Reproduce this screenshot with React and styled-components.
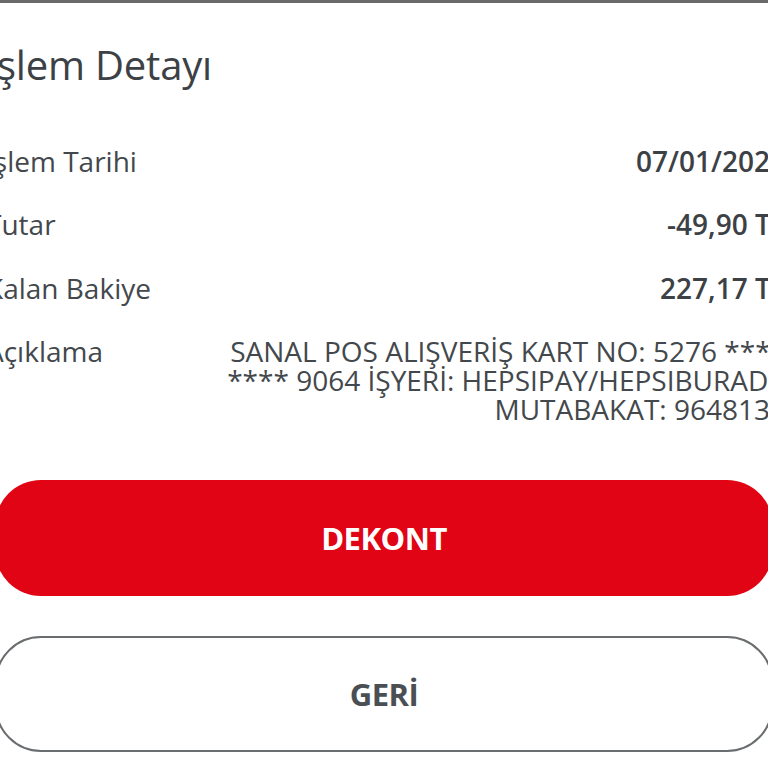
import styled, { createGlobalStyle } from "styled-components";

const GlobalStyle = createGlobalStyle`
    html, body {
        margin: 0;
        padding: 0;
        background: #ffffff;
        overflow: hidden;
    }
    body {
        font-family: "Open Sans", "Liberation Sans", sans-serif;
        color: #3f4448;
    }
`;

const rows = [
    { label: "İşlem Tarihi", value: "07/01/2025" },
    { label: "Tutar", value: "-49,90 TL" },
    { label: "Kalan Bakiye", value: "227,17 TL" },
];

const App = () => {
    return (
        <>
            <GlobalStyle />
            <Sheet>
                <Content>
                    <Title>İşlem Detayı</Title>
                    <List>
                        {rows.map(row => (
                            <Row key={row.label}>
                                <Label>{row.label}</Label>
                                <Value>{row.value}</Value>
                            </Row>
                        ))}
                        <Row>
                            <Label>Açıklama</Label>
                            <Description>
                                SANAL POS ALIŞVERİŞ KART NO: 5276 ****<br />
                                **** 9064 İŞYERİ: HEPSIPAY/HEPSIBURADA<br />
                                MUTABAKAT: 9648134
                            </Description>
                        </Row>
                    </List>
                    <Buttons>
                        <Button primary>DEKONT</Button>
                        <Button>GERİ</Button>
                    </Buttons>
                </Content>
            </Sheet>
        </>
    );
};

export default App;

const Sheet = styled.div`
    width: 768px;
    height: 768px;
    overflow: hidden;
    border-top: 3px solid #6a6a6a;
    box-sizing: border-box;
`;

const Content = styled.div`
    width: 800px;
    margin-left: -14px;
    display: flex;
    flex-direction: column;
`;

const Title = styled.h1`
    margin: 38px 0 0 0;
    font-size: 40px;
    font-weight: 500;
    line-height: 48px;
    letter-spacing: -0.2px;
    color: #3c4145;
`;

const List = styled.div`
    margin-top: 58px;
    display: flex;
    flex-direction: column;
    gap: 34.3px;
`;

const Row = styled.div`
    display: flex;
    justify-content: space-between;
    align-items: flex-start;
    font-size: 28px;
    line-height: 29px;
`;

const Label = styled.span`
    font-weight: 400;
    color: #43484c;
`;

const Value = styled.span`
    font-weight: 600;
    color: #3c4145;
`;

const Description = styled.span`
    text-align: right;
    color: #43484c;
`;

const Buttons = styled.div`
    margin: 56px 13px 0 9px;
    display: flex;
    flex-direction: column;
    gap: 40px;
`;

const Button = styled.button`
    height: 116px;
    border-radius: 46px;
    border: ${p => (p.primary ? "none" : "2px solid #6a6d70")};
    background: ${p => (p.primary ? "#e00414" : "#ffffff")};
    color: ${p => (p.primary ? "#ffffff" : "#4a4f53")};
    font-family: "Open Sans", "Liberation Sans", sans-serif;
    font-size: 31px;
    font-weight: 700;
    letter-spacing: -0.5px;
`;
